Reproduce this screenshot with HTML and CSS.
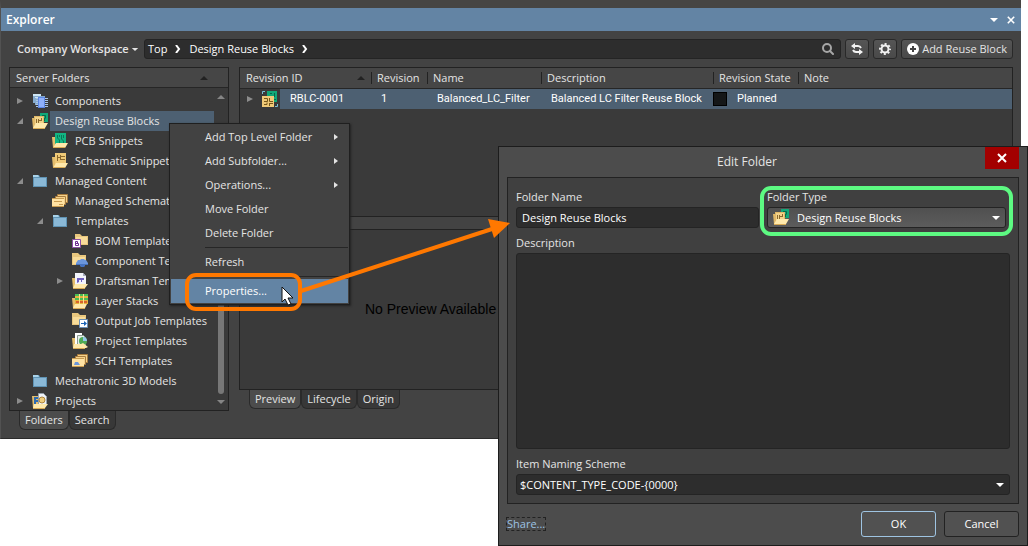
FILE: index.html
```html
<!DOCTYPE html>
<html lang="en">
<head>
    <meta charset="UTF-8">
    <meta name="viewport" content="width=device-width, initial-scale=1.0">
    <title>Explorer</title>
    <link rel="stylesheet" href="styles.css">
</head>
<body>
    <!-- Icon set -->
    <svg class="icon-set" aria-hidden="true">
        <symbol id="i-closed" viewBox="0 0 8 8"><path d="M1 1l6 3-6 3z" fill="#8c8c8c"/></symbol>
        <symbol id="i-open" viewBox="0 0 8 8"><path d="M7 1v6H1z" fill="#8c8c8c"/></symbol>
        <symbol id="i-down" viewBox="0 0 10 6"><path d="M1 1h8L5 5z" fill="currentColor"/></symbol>
        <symbol id="i-up" viewBox="0 0 10 6"><path d="M1 5h8L5 1z" fill="currentColor"/></symbol>
        <symbol id="i-right" viewBox="0 0 6 8"><path d="M1 1l4 3-4 3z" fill="currentColor"/></symbol>
        <symbol id="i-chevron" viewBox="0 0 6 8"><path d="M1 0l3 4-3 4" fill="none" stroke="#fff" stroke-width="2"/></symbol>
        <symbol id="i-folder" viewBox="0 0 16 16">
            <path d="M1 2h6l1 2h7v10H1z" fill="#5f93b4"/>
            <path d="M1 2h5l1 2H1z" fill="#a9d3ea"/>
            <path d="M2 5h12v8H2z" fill="#8ab8d6"/>
        </symbol>
        <symbol id="i-components" viewBox="0 0 16 16">
            <path d="M1 1h8v2h4v3H7v6H3v-2H1z" fill="#86abcd"/>
            <path d="M1 1h8v2H1zM3 4h9v1H3z" fill="#cfe6f5"/>
            <path d="M4 5.5h12M4 7.5h12M4 9.5h12M4 11.5h12M4 13.5h12" stroke="#a9c3e6"/>
            <path d="M6 4h7v11H6z" fill="#5c86e4"/>
            <path d="M7 5h5v9H7z" fill="#8fb0fa"/>
        </symbol>
        <symbol id="i-reuse" viewBox="0 0 16 16">
            <path d="M8 0h8v9H8z" fill="#12a878"/>
            <path d="M10 2.5h3.5v3M12.500 5v3" fill="none" stroke="#07694b"/>
            <path d="M0 5h2V3h10v8l-2 4H1z" fill="#e0b868"/>
            <path d="M3 4h8v7H3z" fill="#f2d38a"/>
            <path d="M4.500 6v4M6.500 6v4M7 7.500h3M9.500 5v3" stroke="#8a682c" fill="none"/>
            <path d="M4 10h12l-3 5H1z" fill="#ffe9ab"/>
            <path d="M1 15h12v1H1z" fill="#d8aa55"/>
        </symbol>
        <symbol id="i-pcb" viewBox="0 0 16 16">
            <path d="M0 4h4v11H1z" fill="#e4bd6c"/>
            <path d="M3 0h11v11H3z" fill="#12b583"/>
            <path d="M5.500 2v3l2 2v3M7.500 2v2M9.500 2v4l2 2v2M11.500 2v3" stroke="#087a57" fill="none"/>
            <path d="M4 10h12l-3 5H1z" fill="#ffe9ab"/>
            <path d="M1 14h12v1H1z" fill="#d8aa55"/>
        </symbol>
        <symbol id="i-schematic" viewBox="0 0 16 16">
            <path d="M0 4h4v11H1z" fill="#e4bd6c"/>
            <path d="M3 0h11v11H3z" fill="#efc977"/>
            <path d="M5.500 2v6M5 4.500h3M8.500 2v5M9 3.500h4M9 6.500h4" stroke="#8a682c" fill="none"/>
            <path d="M4 10h12l-3 5H1z" fill="#ffe9ab"/>
            <path d="M1 14h12v1H1z" fill="#d8aa55"/>
        </symbol>
        <symbol id="i-sheets" viewBox="0 0 16 16">
            <path d="M5.500 1.500h10v8h-10z" fill="#f4d18c" stroke="#a87c3e"/>
            <path d="M3.500 3.500h10v8h-10z" fill="#f4d18c" stroke="#a87c3e"/>
            <path d="M0 5h12v9H0z" fill="#ffe2a3"/>
            <path d="M0 5.500h12M2 8.500h8M7 11.500h4M0 13.500h12" stroke="#c79a50"/>
        </symbol>
        <symbol id="i-bom" viewBox="0 0 16 16">
            <path d="M3 1h5l2 2h6v9H3z" fill="#e9c77e"/><path d="M4 4h11v7H4z" fill="#f8dc9a"/>
            <path d="M.5 6.500h8v8h-8z" fill="#fff" stroke="#8d52a6"/>
            <path d="M3.500 8.500h2v2h-2zM3.500 10.500h3v2h-3z" fill="none" stroke="#6d2d91"/>
        </symbol>
        <symbol id="i-comptpl" viewBox="0 0 16 16">
            <path d="M0 0h6l2 2h6v10H0z" fill="#e9c77e"/><path d="M1 4h12v7H1z" fill="#f8dc9a"/>
            <path d="M4 10l2-3h2l1-1h3l1 1h1l2 3v2h-3l-1 2H9l-1-2H4z" fill="#6b96dc"/>
            <path d="M4 11h12v1h-3l-1 2H9l-1-2H4z" fill="#4572c0"/>
        </symbol>
        <symbol id="i-draftsman" viewBox="0 0 16 16">
            <path d="M0 5h4v10H1z" fill="#e4bd6c"/>
            <path d="M3 0h8l3 3v9H3z" fill="#f3f4fb"/><path d="M11 0l3 3h-3z" fill="#a4a9bd"/>
            <path d="M5 5h7v2h-2v2H9V7H7v2l-2 1V8z" fill="#6f5fc0"/>
            <path d="M3 11h13l-3 4H1z" fill="#ffe9ab"/>
            <path d="M1 15h12v1H1z" fill="#d8aa55"/>
        </symbol>
        <symbol id="i-layers" viewBox="0 0 16 16">
            <path d="M0 5h4v10H1z" fill="#e4bd6c"/>
            <path d="M3 1h13v10H3z" fill="#e6b43c"/>
            <path d="M3 2h13M3 6h13" stroke="#48bd55" stroke-width="2"/>
            <path d="M4 9h11" stroke="#d8622e" stroke-width="2"/>
            <path d="M7.500 1v10M11.500 1v10" stroke="#f8e28e"/>
            <path d="M3 11h12l-2 4H1z" fill="#ffe9ab"/>
            <path d="M1 15h12v1H1z" fill="#d8aa55"/>
        </symbol>
        <symbol id="i-output" viewBox="0 0 16 16">
            <path d="M0 0h6l2 2h6v10H0z" fill="#e9c77e"/><path d="M1 4h12v7H1z" fill="#f8dc9a"/>
            <path d="M7.500 6.500h8v8h-8z" fill="#fff" stroke="#6a8eb5"/>
            <path d="M9 10h3V8l3 2.500-3 2.500v-2H9z" fill="#1a62b5"/>
        </symbol>
        <symbol id="i-projtpl" viewBox="0 0 16 16">
            <path d="M0 5h4v10H1z" fill="#e4bd6c"/>
            <path d="M3 0h7v12H3z" fill="#fff"/><path d="M5.500 2.500h6l2 2v8h-8z" fill="#e5efe8" stroke="#8b9a91"/>
            <circle cx="11" cy="8" r="4" fill="#4faa56"/><path d="M11 4a4 4 0 0 1 4 4h-4z" fill="#95c6ea"/>
            <path d="M2 11h7l2-1 5 4-2 1H1z" fill="#ffe9ab"/>
            <path d="M1 15h12v1H1z" fill="#d8aa55"/>
        </symbol>
        <symbol id="i-schtpl" viewBox="0 0 16 16">
            <path d="M5.500 1.500h10v8h-10z" fill="#f4d18c" stroke="#a87c3e"/>
            <path d="M3.500 3.500h10v8h-10z" fill="#f4d18c" stroke="#a87c3e"/>
            <path d="M0 5h12v9H0z" fill="#ffe2a3"/>
            <path d="M0 5.500h12M0 13.500h12" stroke="#c79a50"/>
            <path d="M2 12l1-3h3l2 3z" fill="#6c96d8"/>
        </symbol>
        <symbol id="i-projects" viewBox="0 0 16 16">
            <path d="M0 3h6v12H1z" fill="#e4bd6c"/>
            <path d="M6.500.5h5l3 3v8h-8z" fill="#f0f3f7" stroke="#96a0aa"/>
            <path d="M6 5H3v6M3 8h3" fill="none" stroke="#2d6bb1" stroke-width="2"/>
            <circle cx="10" cy="7" r="3" fill="#f0cd7c" stroke="#ad863e"/>
            <path d="M2 11h14l-3 4H1z" fill="#ffe9ab"/>
            <path d="M1 15h12v1H1z" fill="#d8aa55"/>
        </symbol>
        <symbol id="i-block" viewBox="0 0 16 16">
            <path d="M5 0h10v11H5z" fill="#12a878"/><path d="M8 2.500h2M12.500 2v4M14 8.500h-2" fill="none" stroke="#07694b"/>
            <path d="M0 5h12v11H0z" fill="#f0ca78"/>
            <path d="M2 7.500h3.500v3H2M7.500 7v3.500H11M2 13.500h3v-2M7.500 12v3M8 12.500h3" fill="none" stroke="#765719"/>
            <path d="M.5 3V.5H3M13 15.500h2.500V13" fill="none" stroke="#79bfd8"/>
        </symbol>
        <symbol id="i-search" viewBox="0 0 12 12">
            <circle cx="5" cy="5" r="4" fill="none" stroke="#a6a6a6" stroke-width="2"/>
            <path d="M8 8l3 3" stroke="#a6a6a6" stroke-width="2" stroke-linecap="round"/>
        </symbol>
        <symbol id="i-refresh" viewBox="0 0 12 12">
            <path d="M3 3h4q2 0 3 2M9 9H5Q3 9 2 7" fill="none" stroke="#f2f2f2" stroke-width="2"/>
            <path d="M4 0v6L0 3zM8 6v6l4-3z" fill="#f2f2f2"/>
        </symbol>
        <symbol id="i-gear" viewBox="0 0 12 12">
            <circle cx="6" cy="6" r="5" fill="none" stroke="#f2f2f2" stroke-width="2" stroke-dasharray="2 1.927" stroke-dashoffset="1"/>
            <circle cx="6" cy="6" r="3.500" fill="none" stroke="#f2f2f2" stroke-width="2"/>
        </symbol>
        <symbol id="i-add" viewBox="0 0 12 12">
            <circle cx="6" cy="6" r="6" fill="#fff"/>
            <path d="M6 3v6M3 6h6" stroke="#444" stroke-width="2"/>
        </symbol>
        <symbol id="i-close" viewBox="0 0 10 10"><path d="M1 1l8 8M9 1L1 9" stroke="#fff" stroke-width="2"/></symbol>
    </svg>

    <main class="explorer">
        <header class="titlebar">
            <h1>Explorer</h1>
            <button class="plain" aria-label="Panel menu"><svg class="caret"><use href="#i-down"/></svg></button>
            <button class="plain" aria-label="Close panel"><svg class="small-icon"><use href="#i-close"/></svg></button>
        </header>

        <div class="toolbar">
            <button class="plain workspace">Company Workspace <svg class="caret-small"><use href="#i-down"/></svg></button>
            <nav class="breadcrumb">
                <a href="#">Top</a>
                <svg class="chevron"><use href="#i-chevron"/></svg>
                <a href="#">Design Reuse Blocks</a>
                <svg class="chevron"><use href="#i-chevron"/></svg>
                <button class="plain search" aria-label="Search"><svg class="tool-icon"><use href="#i-search"/></svg></button>
            </nav>
            <button class="tool" aria-label="Refresh"><svg class="tool-icon"><use href="#i-refresh"/></svg></button>
            <button class="tool" aria-label="Settings"><svg class="tool-icon"><use href="#i-gear"/></svg></button>
            <button class="tool"><svg class="tool-icon"><use href="#i-add"/></svg>Add Reuse Block</button>
        </div>

        <div class="columns">
            <section class="folders">
                <div class="panel tree-panel">
                    <div class="panel-head">Server Folders <svg class="caret sort"><use href="#i-up"/></svg></div>
                    <div class="tree-body">
                        <ul class="tree">
                            <li class="row"><button class="plain twisty" aria-label="Expand"><svg><use href="#i-closed"/></svg></button><svg class="icon"><use href="#i-components"/></svg><span>Components</span></li>
                            <li class="row selected"><button class="plain twisty" aria-label="Collapse"><svg><use href="#i-open"/></svg></button><svg class="icon"><use href="#i-reuse"/></svg><span>Design Reuse Blocks</span></li>
                            <li class="row leaf level-2"><svg class="icon"><use href="#i-pcb"/></svg><span>PCB Snippets</span></li>
                            <li class="row leaf level-2"><svg class="icon"><use href="#i-schematic"/></svg><span>Schematic Snippets</span></li>
                            <li class="row"><button class="plain twisty" aria-label="Collapse"><svg><use href="#i-open"/></svg></button><svg class="icon"><use href="#i-folder"/></svg><span>Managed Content</span></li>
                            <li class="row leaf level-2"><svg class="icon"><use href="#i-sheets"/></svg><span>Managed Schematic Sheets</span></li>
                            <li class="row level-2"><button class="plain twisty" aria-label="Collapse"><svg><use href="#i-open"/></svg></button><svg class="icon"><use href="#i-folder"/></svg><span>Templates</span></li>
                            <li class="row leaf level-3"><svg class="icon"><use href="#i-bom"/></svg><span>BOM Templates</span></li>
                            <li class="row leaf level-3"><svg class="icon"><use href="#i-comptpl"/></svg><span>Component Templates</span></li>
                            <li class="row level-3"><button class="plain twisty" aria-label="Expand"><svg><use href="#i-closed"/></svg></button><svg class="icon"><use href="#i-draftsman"/></svg><span>Draftsman Templates</span></li>
                            <li class="row leaf level-3"><svg class="icon"><use href="#i-layers"/></svg><span>Layer Stacks</span></li>
                            <li class="row leaf level-3"><svg class="icon"><use href="#i-output"/></svg><span>Output Job Templates</span></li>
                            <li class="row leaf level-3"><svg class="icon"><use href="#i-projtpl"/></svg><span>Project Templates</span></li>
                            <li class="row leaf level-3"><svg class="icon"><use href="#i-schtpl"/></svg><span>SCH Templates</span></li>
                            <li class="row leaf"><svg class="icon"><use href="#i-folder"/></svg><span>Mechatronic 3D Models</span></li>
                            <li class="row"><button class="plain twisty" aria-label="Expand"><svg><use href="#i-closed"/></svg></button><svg class="icon"><use href="#i-projects"/></svg><span>Projects</span></li>
                        </ul>
                        <div class="scrollbar">
                            <svg class="caret"><use href="#i-up"/></svg>
                            <div class="thumb"></div>
                            <svg class="caret"><use href="#i-down"/></svg>
                        </div>
                    </div>
                </div>
                <div class="tabs">
                    <button class="tab active">Folders</button>
                    <button class="tab">Search</button>
                </div>
            </section>

            <section class="items">
                <div class="panel list-panel">
                    <table class="list">
                        <thead>
                            <tr>
                                <th class="col-id">Revision ID <svg class="caret sort"><use href="#i-up"/></svg></th>
                                <th class="col-rev">Revision</th>
                                <th class="col-name">Name</th>
                                <th class="col-desc">Description</th>
                                <th class="col-state">Revision State</th>
                                <th>Note</th>
                            </tr>
                        </thead>
                        <tbody>
                            <tr>
                                <td class="id-cell">
                                    <div class="row"><button class="plain twisty" aria-label="Expand"><svg><use href="#i-closed"/></svg></button><svg class="icon"><use href="#i-block"/></svg><span>RBLC-0001</span></div>
                                </td>
                                <td>1</td>
                                <td>Balanced_LC_Filter</td>
                                <td>Balanced LC Filter Reuse Block</td>
                                <td class="state-cell"><span class="swatch"></span>Planned</td>
                                <td></td>
                            </tr>
                        </tbody>
                    </table>
                </div>
                <div class="panel preview">No Preview Available</div>
                <div class="tabs">
                    <button class="tab active">Preview</button>
                    <button class="tab">Lifecycle</button>
                    <button class="tab">Origin</button>
                </div>
            </section>
        </div>
    </main>

    <!-- Context menu -->
    <div class="menu" role="menu">
        <button class="menu-item" role="menuitem">Add Top Level Folder <svg><use href="#i-right"/></svg></button>
        <button class="menu-item" role="menuitem">Add Subfolder... <svg><use href="#i-right"/></svg></button>
        <button class="menu-item" role="menuitem">Operations... <svg><use href="#i-right"/></svg></button>
        <button class="menu-item" role="menuitem">Move Folder</button>
        <button class="menu-item" role="menuitem">Delete Folder</button>
        <hr>
        <button class="menu-item" role="menuitem">Refresh</button>
        <hr>
        <button class="menu-item active" role="menuitem">Properties...</button>
    </div>

    <!-- Edit Folder dialog -->
    <form class="dialog" role="dialog" aria-labelledby="dialogTitle">
        <header class="dialog-head">
            <h2 id="dialogTitle">Edit Folder</h2>
            <button type="button" class="dialog-close" aria-label="Close"><svg class="close-icon"><use href="#i-close"/></svg></button>
        </header>
        <div class="dialog-body">
            <div class="field-row">
                <div class="field">
                    <label for="folderName">Folder Name</label>
                    <input id="folderName" type="text" value="Design Reuse Blocks">
                </div>
                <div class="field">
                    <label for="folderType">Folder Type</label>
                    <div class="select raised">
                        <svg class="icon"><use href="#i-reuse"/></svg>
                        <select id="folderType"><option>Design Reuse Blocks</option></select>
                        <svg class="caret"><use href="#i-down"/></svg>
                    </div>
                </div>
            </div>
            <div class="field">
                <label for="description">Description</label>
                <textarea id="description"></textarea>
            </div>
            <div class="field">
                <label for="naming">Item Naming Scheme</label>
                <div class="select">
                    <select id="naming"><option>$CONTENT_TYPE_CODE-{0000}</option></select>
                    <svg class="caret"><use href="#i-down"/></svg>
                </div>
            </div>
        </div>
        <footer class="dialog-foot">
            <a href="#">Share...</a>
            <button type="button" class="btn primary">OK</button>
            <button type="button" class="btn">Cancel</button>
        </footer>
    </form>

    <!-- Callouts and mouse pointer -->
    <svg class="callouts" viewBox="0 0 1028 546" aria-hidden="true">
        <rect x="187" y="275" width="113" height="34" rx="9" fill="none" stroke="#ff7800" stroke-width="4"/>
        <path d="M301 291L492 229" stroke="#ff7800" stroke-width="4"/>
        <path d="M488 219l22 4-16 15z" fill="#ff7800"/>
        <rect x="762" y="188" width="249" height="46" rx="9" fill="none" stroke="#5dfa82" stroke-width="4"/>
        <path d="M282 287v15l3-3 3 6 3-1-3-6h5z" fill="#fff" stroke="#111"/>
    </svg>
</body>
</html>
```
FILE: styles.css
```css
* {
    margin: 0;
    padding: 0;
    box-sizing: border-box;
}

body {
    position: relative;
    min-height: 100vh;
    background: #fff;
    color: #e4e4e4;
    font-family: 'Open Sans', 'Noto Sans', sans-serif;
    font-size: 11px;
    line-height: 20px;
}

button,
input,
select,
textarea {
    font: inherit;
    color: inherit;
}

a {
    color: inherit;
    text-decoration: none;
}

svg {
    display: block;
    flex: none;
}

.icon-set {
    position: absolute;
    width: 0;
    height: 0;
}

.plain {
    background: none;
    border: none;
}

.icon {
    width: 16px;
    height: 16px;
}

.caret {
    width: 10px;
    height: 6px;
}

.caret-small {
    width: 8px;
    height: 5px;
}

.small-icon {
    width: 8px;
    height: 8px;
}

.tool-icon {
    width: 12px;
    height: 12px;
}

/* Explorer panel */
.explorer {
    margin-right: 7px;
    padding-bottom: 8px;
    background: #434343;
    border-top: 8px solid #464543;
    border-left: 1px solid #525252;
    border-bottom: 1px solid #2b2b2b;
}

.titlebar {
    display: flex;
    align-items: center;
    gap: 8px;
    height: 23px;
    padding: 0 6px 0 5px;
    background: #6384a4;
    color: #fff;
}

.titlebar h1 {
    flex: 1;
    font-size: 12px;
    font-weight: 600;
}

.toolbar {
    display: flex;
    gap: 4px;
    padding: 8px 8px 0;
}

.workspace {
    display: flex;
    align-items: center;
    gap: 2px;
    width: 131px;
    padding-left: 8px;
    font-weight: 600;
    white-space: nowrap;
}

.breadcrumb {
    flex: 1;
    display: flex;
    align-items: center;
    gap: 8px;
    height: 20px;
    padding: 0 3px;
    background: #2d2d2d;
    border: 1px solid #242424;
    border-radius: 3px;
    color: #fff;
}

.chevron {
    width: 6px;
    height: 8px;
}

.search {
    margin-left: auto;
    padding: 0 3px;
}

.tool {
    display: flex;
    align-items: center;
    gap: 3px;
    height: 20px;
    padding: 0 5px;
    line-height: 18px;
    background: linear-gradient(#555, #494949);
    border: 1px solid #292929;
    border-radius: 3px;
}

.columns {
    display: flex;
    gap: 10px;
    padding: 8px 8px 0;
}

.panel {
    background: #3a3a3a;
    border: 1px solid #222;
}

.panel-head {
    display: flex;
    align-items: center;
    justify-content: space-between;
    height: 20px;
    padding: 0 6px;
    background: #464646;
    border-bottom: 1px solid #262626;
}

.sort {
    color: #222;
}

.panel-head .sort {
    margin-right: 13px;
}

/* Folder tree */
.folders {
    width: 220px;
    flex: none;
}

.tree-body {
    display: flex;
    height: 322px;
    padding-top: 3px;
}

.tree {
    flex: 1;
    min-width: 0;
    list-style: none;
}

.row {
    display: flex;
    align-items: center;
    height: 20px;
}

.row .icon {
    margin: 0 2px;
}

.row span {
    flex: 1;
    padding-left: 5px;
    white-space: nowrap;
}

.twisty {
    width: 20px;
    height: 20px;
    padding: 0 6px;
}

.twisty svg {
    width: 8px;
    height: 8px;
}

.leaf {
    padding-left: 20px;
}

.level-2 {
    padding-left: 20px;
}

.level-2.leaf,
.level-3 {
    padding-left: 40px;
}

.level-3.leaf {
    padding-left: 60px;
}

.selected span {
    background: #4d6072;
}

.scrollbar {
    display: flex;
    flex-direction: column;
    align-items: center;
    width: 14px;
    padding: 3px 0 5px;
    color: #858585;
}

.thumb {
    width: 6px;
    height: 200px;
    margin: auto 0 5px;
    background: #777;
    border-radius: 3px;
}

.tabs {
    display: flex;
    padding-left: 10px;
}

.tab {
    height: 19px;
    padding: 0 5px;
    line-height: 18px;
    background: #383838;
    border: 1px solid #2a2a2a;
    border-top: none;
    border-radius: 0 0 6px 6px;
}

.tab.active {
    background: #4c4c4c;
}

/* Revision list and preview */
.items {
    flex: 1;
    min-width: 0;
}

.list-panel {
    height: 150px;
    margin-bottom: 12px;
}

.list {
    width: 100%;
    table-layout: fixed;
    border-collapse: collapse;
}

.list th {
    position: relative;
    height: 20px;
    padding-left: 6px;
    background: #464646;
    border-bottom: 1px solid #262626;
    font-weight: normal;
    text-align: left;
    white-space: nowrap;
}

.list th + th::before {
    content: '';
    position: absolute;
    left: 0;
    top: 4px;
    height: 12px;
    border-left: 1px solid #222;
}

.list th .sort {
    position: absolute;
    right: 5px;
    top: 7px;
}

.col-id { width: 131px; }
.col-rev { width: 56px; }
.col-name { width: 114px; }
.col-desc { width: 172px; }
.col-state { width: 85px; }

.list td {
    height: 20px;
    padding-left: 10px;
    background: #4d6072;
    color: #fff;
    font-family: Roboto, 'Liberation Sans', sans-serif;
    white-space: nowrap;
}

.list .id-cell {
    padding: 0;
    background: #3a3a3a;
}

.id-cell span {
    padding-left: 10px;
    background: #4d6072;
}

.list .state-cell {
    padding-left: 0;
}

.swatch {
    display: inline-block;
    width: 14px;
    height: 14px;
    margin-right: 10px;
    background: #151718;
    border: 1px solid #000;
    vertical-align: middle;
}

.preview {
    height: 161px;
    padding: 69px 0 0 125px;
    color: #000;
    font-family: 'Liberation Sans', Arial, sans-serif;
    font-size: 14px;
}

/* Context menu */
.menu {
    position: absolute;
    left: 169px;
    top: 123px;
    width: 181px;
    padding: 1px;
    background: #424242;
    border: 1px solid #1f1f1f;
    box-shadow: 1px 1px 2px #222;
}

.menu-item {
    display: flex;
    align-items: center;
    justify-content: space-between;
    width: 100%;
    height: 24px;
    padding: 0 9px 0 34px;
    background: none;
    border: none;
}

.menu-item svg {
    width: 6px;
    height: 8px;
}

.menu-item.active {
    background: #6384a4;
    color: #fff;
}

.menu hr {
    margin: 2px 0 2px 34px;
    border: none;
    border-top: 1px solid #262626;
}

/* Edit Folder dialog */
.dialog {
    position: absolute;
    left: 498px;
    right: 0;
    top: 146px;
    padding: 0 8px 8px;
    background: #4c4c4c;
    border: 1px solid #1c1c1c;
}

.dialog-head {
    position: relative;
    height: 30px;
    text-align: center;
}

.dialog-head h2 {
    padding-right: 32px;
    font-size: 12px;
    font-weight: normal;
    line-height: 30px;
}

.dialog-close {
    position: absolute;
    top: 0;
    right: 0;
    width: 34px;
    height: 22px;
    padding: 0 12px;
    background: #a30000;
    border: none;
}

.close-icon {
    width: 10px;
    height: 10px;
}

.dialog-body {
    padding: 9px 8px 8px;
    background: #404040;
    border: 1px solid #222;
}

.field-row {
    display: grid;
    grid-template-columns: 243px 1fr;
    gap: 8px;
    padding-right: 4px;
}

.field label {
    display: block;
    height: 20px;
}

.field + .field {
    margin-top: 5px;
}

.field-row .field {
    margin: 0;
}

.field-row + .field {
    margin-top: 5px;
}

input,
textarea,
select {
    display: block;
    width: 100%;
    height: 21px;
    padding: 0 5px;
    background: #2d2d2d;
    border: 1px solid #242424;
    border-radius: 3px;
    color: #fff;
    appearance: none;
}

.field textarea {
    height: 196px;
    resize: none;
}

.select {
    position: relative;
}

.select select {
    padding: 0 3px;
}

.select .caret {
    position: absolute;
    right: 5px;
    top: 8px;
    color: #fff;
}

.select .icon {
    position: absolute;
    left: 6px;
    top: 2px;
}

.raised select {
    padding-left: 29px;
    background: linear-gradient(#505050, #5c5c5c);
}

.dialog-foot {
    display: flex;
    align-items: center;
    gap: 8px;
    padding-top: 7px;
}

.dialog-foot a {
    margin-right: auto;
    line-height: 12px;
    color: #9cc3e4;
    outline: 1px dashed #222;
}

.btn {
    width: 75px;
    height: 26px;
    background: #515151;
    border: 1px solid #222;
    border-radius: 3px;
    color: #fff;
}

.btn.primary {
    border-color: #9fc4e2;
}

.callouts {
    position: absolute;
    left: 0;
    top: 0;
    width: 1028px;
    height: 546px;
    pointer-events: none;
}
```
